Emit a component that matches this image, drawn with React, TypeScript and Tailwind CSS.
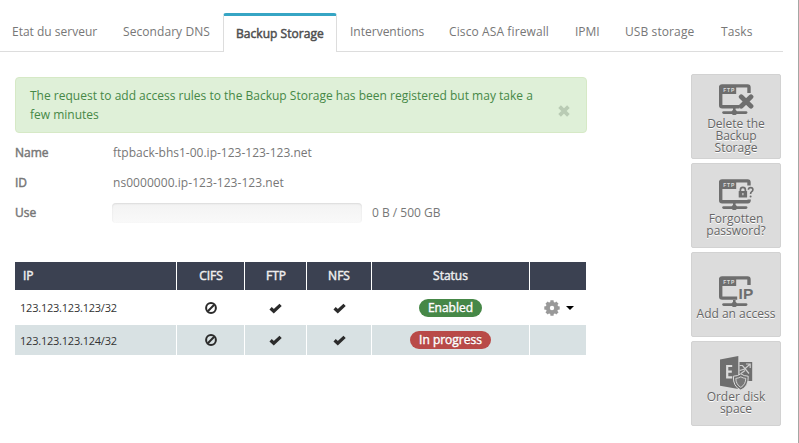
import React from "react";

const tabs = [
  { label: "Etat du serveur", cell: "w-[111px]", track: "" },
  { label: "Secondary DNS", cell: "w-[112px]", track: "tracking-[0.07px]" },
  { label: "Backup Storage", cell: "w-[114px]", track: "", active: true },
  { label: "Interventions", cell: "w-[100px]", track: "indent-px" },
  { label: "Cisco ASA firewall", cell: "w-[126px]", track: "tracking-[0.11px]" },
  { label: "IPMI", cell: "w-[50px]", track: "" },
  { label: "USB storage", cell: "w-[96px]", track: "tracking-[0.1px]" },
  { label: "Tasks", cell: "w-[74px]", track: "tracking-[0.1px]" },
];

function Tabs() {
  return (
    <nav className="flex h-[52px] w-[783px] items-end">
      {tabs.map((t) =>
        t.active ? (
          <div
            key={t.label}
            className={`${t.cell} h-[39px] shrink-0 rounded-t-[3px] border-x border-t-[3px] border-x-[#ddd] border-t-[#36a5c4] pt-[9px] pl-[12px] tracking-[0.04px] whitespace-nowrap text-[#505050] [-webkit-text-stroke:0.5px_#505050]`}
          >
            {t.label}
          </div>
        ) : (
          <div
            key={t.label}
            className={`${t.cell} ${t.track} h-[39px] shrink-0 border-b border-[#ddd] pt-[10px] pl-[12px] whitespace-nowrap`}
          >
            {t.label}
          </div>
        ),
      )}
    </nav>
  );
}

function Screen({ cut, children }: { cut: string; children: React.ReactNode }) {
  return (
    <svg width="36" height="32" viewBox="0 0 36 32" fill="none" className="mx-auto block">
      <path d={cut} stroke="#6e6e6e" strokeWidth="3.4" strokeLinejoin="round" />
      <path d="M1.2 2h17v8h-17z" fill="#6e6e6e" />
      <text x="5.2" y="8.2" fontSize="5" fontWeight="700" letterSpacing="0.8" fill="#dcdcdc" fontFamily="Liberation Sans, sans-serif">
        FTP
      </text>
      <path d="M16.3 24v4" stroke="#6e6e6e" strokeWidth="2.6" />
      <path d="M5.6 28.6h22.4" stroke="#6e6e6e" strokeWidth="2.8" strokeLinecap="round" />
      <circle cx="16.3" cy="28.4" r="2.7" fill="#6e6e6e" />
      {children}
    </svg>
  );
}

const DeleteIcon = () => (
  <Screen cut="M31 9V3.4q0-1.5-1.5-1.5H4.2q-1.5 0-1.5 1.5v17.8q0 1.5 1.5 1.5h17.3">
    <path d="M23.2 12.8l9.8 9.4M33 12.8l-9.8 9.4" stroke="#6e6e6e" strokeWidth="4.8" strokeLinecap="round" />
  </Screen>
);

const PasswordIcon = () => (
  <Screen cut="M31 6.5V3.4q0-1.5-1.5-1.5H4.2q-1.5 0-1.5 1.5v17.8q0 1.5 1.5 1.5h25.6q1.4 0 1.4-2.2">
    <rect x="20.7" y="12" width="8.4" height="6.6" rx="0.6" fill="#6e6e6e" />
    <path d="M22.4 12.5v-1.6a2.5 2.5 0 0 1 5 0v1.6" stroke="#6e6e6e" strokeWidth="1.7" />
    <path d="M24.9 14v2.2" stroke="#ddd" strokeWidth="1.1" />
    <path d="M30.4 10.8q0-2.2 2.3-2.2 2.2 0 2.2 2.1 0 1.3-1.4 2.1-.9.6-.9 2.1" stroke="#6e6e6e" strokeWidth="1.6" />
    <circle cx="32.6" cy="17.4" r="1" fill="#6e6e6e" />
  </Screen>
);

const AccessIcon = () => (
  <Screen cut="M31 9V3.4q0-1.5-1.5-1.5H4.2q-1.5 0-1.5 1.5v17.2q0 1.5 1.5 1.5h15.3">
    <path d="M19.4 10.6h16v13.8h-16z" fill="#dcdcdc" />
    <text x="20.6" y="23" fontSize="15.5" fontWeight="700" fill="#6e6e6e" textLength="14.6" lengthAdjust="spacingAndGlyphs" fontFamily="Liberation Sans, sans-serif">
      IP
    </text>
  </Screen>
);

const DiskIcon = () => (
  <svg width="34" height="35" viewBox="0 0 34 35" fill="none" className="mx-auto block">
    <path d="M1 3.5L19.3 0v33L1 29.8z" fill="#6e6e6e" />
    <path d="M13.2 10H8.2v11.4h5M8 15.6h4.8" stroke="#dcdcdc" strokeWidth="2.2" />
    <path d="M20.5 6h12.7v19H20.5z" fill="#6e6e6e" />
    <path d="M20.5 9.5h3l6.5 8M31.2 8l-5.5 5-5 1.5M27 8h4.2v4M22 17.5l4-3" stroke="#cfcfcf" strokeWidth="1.2" />
    <path d="M21.8 17.8q3.2 2.4 7.4 2.4.6 10.2-7.4 13.9-8-3.7-7.4-13.9 4.2 0 7.4-2.4z" fill="#6e6e6e" stroke="#dcdcdc" strokeWidth="1" />
    <path d="M21.8 20.8q2.3 1.4 5 1.6-.1 6.1-5 9-4.9-2.9-5-9 2.7-.2 5-1.6z" fill="#777" stroke="#dcdcdc" strokeWidth="0.9" />
  </svg>
);

const actions = [
  { text: "Delete the Backup Storage", wrap: "w-[68px]", icon: <DeleteIcon />, pad: "pt-[9px]", gap: "mt-[2px]" },
  { text: "Forgotten password?", wrap: "w-[68px]", icon: <PasswordIcon />, pad: "pt-[15px]", gap: "mt-[2px]" },
  { text: "Add an access", wrap: "w-[86px]", icon: <AccessIcon />, pad: "pt-[23px]", gap: "mt-0" },
  { text: "Order disk space", wrap: "w-[68px]", icon: <DiskIcon />, pad: "pt-[14px]", gap: "mt-0" },
];

const Ban = () => (
  <svg width="12" height="12" viewBox="0 0 12 12" fill="none" className="mx-auto block">
    <circle cx="6" cy="6" r="4.9" stroke="#2b2b2b" strokeWidth="2" />
    <path d="M2.8 9.2l6.4-6.4" stroke="#2b2b2b" strokeWidth="2" />
  </svg>
);

const Check = () => (
  <svg width="13" height="12" viewBox="0 0 13 12" fill="none" className="mx-auto block">
    <path d="M1.6 6.2l3.2 3.1 6.8-6.4" stroke="#2b2b2b" strokeWidth="3.3" />
  </svg>
);

const Gear = () => (
  <svg width="16" height="16" viewBox="-8 -8 16 16" fill="none">
    {[0, 45, 90, 135].map((a) => (
      <rect key={a} x="-1.7" y="-7.7" width="3.4" height="15.4" rx="0.4" fill="#999" transform={`rotate(${a})`} />
    ))}
    <circle r="4.2" stroke="#999" strokeWidth="4" />
    <circle r="2.2" fill="#fff" />
  </svg>
);

const columns = "grid grid-cols-[161px_67px_61px_64px_157px_56px] gap-x-px";

function AccessRow({ ip, status, shaded }: { ip: string; status: string; shaded?: boolean }) {
  const cell = shaded ? "flex items-center justify-center bg-[#d8e1e3]" : "flex items-center justify-center";
  return (
    <div className={shaded ? `${columns} h-[30px]` : `${columns} h-[35px]`}>
      <div className={`${cell} justify-start! pl-[5px] text-[11px] tracking-[-0.22px] text-[#333]`}>
        <span className={shaded ? "pt-[2px]" : ""}>{ip}</span>
      </div>
      <div className={cell}><Ban /></div>
      <div className={cell}><Check /></div>
      <div className={cell}><Check /></div>
      <div className={cell}>
        <span
          className={`${shaded ? "w-[81px] bg-[#b94a48]" : "w-[63px] bg-[#468847]"} h-[18px] rounded-full text-center leading-[17px] text-white [-webkit-text-stroke:0.4px_#fff] [text-shadow:0_-1px_0_rgba(0,0,0,0.25)]`}
        >
          {status}
        </span>
      </div>
      <div className={cell}>
        {!shaded && (
          <div className="flex items-center gap-[6px] pl-[2px]">
            <Gear />
            <span className="h-0 w-0 border-x-4 border-t-4 border-x-transparent border-t-black" />
          </div>
        )}
      </div>
    </div>
  );
}

export default function App() {
  const label = "[-webkit-text-stroke:0.45px_#777]";
  return (
    <div className="h-[443px] w-[799px] overflow-hidden border-r border-[#a4a7a4] bg-white font-['Open_Sans',sans-serif] text-[12px] leading-[18px] text-[#777]">
      <Tabs />
      <div className="flex">
        <main className="ml-[15px] w-[572px] pt-[25px]">
          <div className="flex h-[56px] justify-between rounded-[4px] border border-[#d6e9c6] bg-[#dff0d8] pl-[14px] text-[#468847]">
            <p className="w-[510px] pt-[8px] leading-[19px]">
              The request to add access rules to the Backup Storage has been registered but may take a
              <br />
              few minutes
            </p>
            <svg width="12" height="12" viewBox="0 0 12 12" className="mt-[27px] mr-[16px]">
              <path d="M2.9 2.9l6.2 6.2M9.1 2.9l-6.2 6.2" stroke="#b9cbb4" strokeWidth="3.7" strokeLinecap="square" />
            </svg>
          </div>
          <dl className="mt-[5px]">
            <div className="flex h-[30px] items-center">
              <dt className={`w-[98px] ${label}`}>Name</dt>
              <dd>ftpback-bhs1-00.ip-123-123-123.net</dd>
            </div>
            <div className="flex h-[30px] items-center">
              <dt className={`w-[98px] ${label}`}>ID</dt>
              <dd className="tracking-[0.05px]">ns0000000.ip-123-123-123.net</dd>
            </div>
            <div className="flex h-[30px] items-center">
              <dt className={`w-[97px] ${label}`}>Use</dt>
              <dd className="flex items-center gap-[10px]">
                <div className="h-[20px] w-[250px] rounded-[4px] bg-linear-to-b from-[#f3f3f3] to-[#f9f9f9] shadow-[inset_0_1px_2px_rgba(0,0,0,0.1)]" />
                <span>0 B / 500 GB</span>
              </dd>
            </div>
          </dl>
          <section className="mt-[34px]">
            <div className={`${columns} h-[28px] text-center leading-[27px] text-[#eee] [-webkit-text-stroke:0.45px_#eee]`}>
              <div className="bg-[#3b4151] pl-[8px] text-left">IP</div>
              <div className="bg-[#3b4151] pl-px">CIFS</div>
              <div className="bg-[#3b4151] pl-px">FTP</div>
              <div className="bg-[#3b4151]">NFS</div>
              <div className="bg-[#3b4151]">Status</div>
              <div className="bg-[#3b4151]" />
            </div>
            <AccessRow ip="123.123.123.123/32" status="Enabled" />
            <AccessRow ip="123.123.123.124/32" status="In progress" shaded />
          </section>
        </main>
        <aside className="ml-[104px] flex w-[90px] flex-col gap-1 pt-[22px]">
          {actions.map((a) => (
            <div key={a.text} className={`${a.pad} h-[85px] rounded-[2px] border border-[#d2d2d2] bg-[#dcdcdc] text-center leading-[12px] text-[#666]`}>
              {a.icon}
              <p className={`${a.gap} ${a.wrap} mx-auto [text-shadow:0_1px_0_#fff]`}>{a.text}</p>
            </div>
          ))}
        </aside>
      </div>
    </div>
  );
}
